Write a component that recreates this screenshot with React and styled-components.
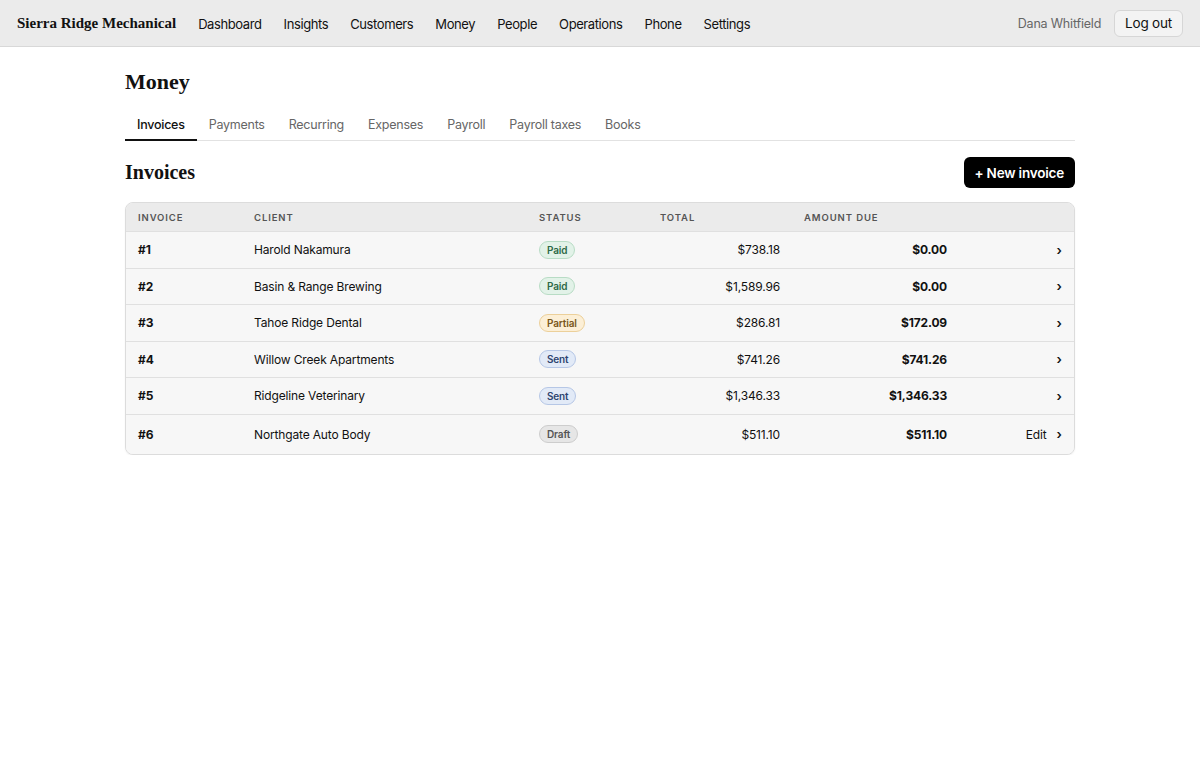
import React from 'react';
import styled, { createGlobalStyle } from 'styled-components';

const Global = createGlobalStyle`
  html, body { margin: 0; padding: 0; background: #fff; }
  body {
    font-family: Inter, "Helvetica Neue", Arial, sans-serif;
    color: #111;
    -webkit-font-smoothing: antialiased;
  }
  * { box-sizing: border-box; }
`;

const TopBar = styled.header`
  height: 47px;
  background: #ebebeb;
  border-bottom: 1px solid #d8d8d8;
  display: flex;
  align-items: center;
  padding: 0 17px;
`;

const Brand = styled.div`
  font-family: "Liberation Serif", Georgia, serif;
  font-weight: 700;
  font-size: 15px;
  margin: 1px 22px 0 0;
`;

const MainNav = styled.nav`
  display: flex;
  gap: 22px;
  flex: 1;
`;

const NavItem = styled.a`
  font-size: 13px;
  letter-spacing: -0.4px;
  color: #111;
  text-decoration: none;
  padding-top: 1px;
`;

const UserBox = styled.div`
  display: flex;
  align-items: center;
  gap: 13px;
`;

const UserName = styled.span`
  font-size: 12.5px;
  letter-spacing: -0.2px;
  color: #666;
`;

const GhostButton = styled.button`
  font-family: inherit;
  font-size: 13.5px;
  letter-spacing: -0.2px;
  color: #111;
  background: #f3f3f3;
  border: 1px solid #d6d6d6;
  border-radius: 6px;
  height: 27px;
  padding: 0 10px;
`;

const Page = styled.main`
  width: 950px;
  margin: 0 auto;
  padding-top: 22px;
`;

const PageTitle = styled.h1`
  font-family: "Liberation Serif", Georgia, serif;
  font-size: 22px;
  font-weight: 700;
  margin: 0 0 22px;
  line-height: 26px;
`;

const Tabs = styled.div`
  display: flex;
  border-bottom: 1px solid #e2e2e2;
`;

const Tab = styled.a`
  font-size: 12.5px;
  letter-spacing: -0.25px;
  padding: 0 12px 7px;
  color: ${p => (p.$active ? '#111' : '#666')};
  font-weight: ${p => (p.$active ? 500 : 400)};
  border-bottom: 2px solid ${p => (p.$active ? '#111' : 'transparent')};
  margin-bottom: -1px;
  text-decoration: none;
`;

const SectionHead = styled.div`
  display: flex;
  align-items: center;
  justify-content: space-between;
  margin: 16px 0 14px;
`;

const SectionTitle = styled.h2`
  font-family: "Liberation Serif", Georgia, serif;
  font-size: 20px;
  font-weight: 700;
  margin: 0;
`;

const PrimaryButton = styled.button`
  font-family: inherit;
  font-size: 13.5px;
  font-weight: 600;
  letter-spacing: -0.2px;
  color: #fff;
  background: #000;
  border: none;
  border-radius: 6px;
  height: 31px;
  padding: 0 11px;
`;

const Table = styled.div`
  border: 1px solid #dcdcdc;
  border-radius: 8px;
  overflow: hidden;
  background: #f7f7f7;
  box-shadow: 0 1px 2px rgba(0, 0, 0, 0.05);
`;

const Row = styled.div`
  display: grid;
  grid-template-columns: 116px 285px 121px 144px 167px 1fr;
  align-items: center;
  min-height: ${p => (p.$head ? '28px' : '36.5px')};
  background: ${p => (p.$head ? '#ebebeb' : '#f7f7f7')};
  border-top: ${p => (p.$head ? 'none' : '1px solid #e0e0e0')};
`;

const HeadCell = styled.div`
  padding: 1px 12px 0;
  font-size: 9.5px;
  font-weight: 600;
  letter-spacing: 0.9px;
  text-transform: uppercase;
  color: #555;
`;

const Cell = styled.div`
  padding: 0 12px;
  font-size: 12px;
  letter-spacing: -0.15px;
  color: #111;
  text-align: ${p => p.$align || 'left'};
  font-weight: ${p => (p.$bold ? 700 : 400)};
`;

const ActionCell = styled.div`
  padding: 0 12px;
  display: flex;
  justify-content: flex-end;
  align-items: center;
  gap: 10px;
`;

const EditButton = styled.button`
  font-family: inherit;
  font-size: 12px;
  letter-spacing: -0.15px;
  color: #111;
  background: transparent;
  border: none;
  padding: 12px 0;
`;

const Chevron = styled.span`
  font-size: 13px;
  font-weight: 600;
`;

const badgeColors = {
  Paid: { bg: '#e2f2e8', bd: '#b8dcc5', fg: '#2e6a47' },
  Partial: { bg: '#fcefd6', bd: '#ecd09a', fg: '#7a5719' },
  Sent: { bg: '#e2eaf7', bd: '#b6c7e6', fg: '#2e4470' },
  Draft: { bg: '#e6e6e6', bd: '#cdcdcd', fg: '#555' },
};

const Badge = styled.span`
  display: inline-block;
  font-size: 10px;
  font-weight: 600;
  line-height: 16px;
  padding: 0 7px;
  border-radius: 9px;
  background: ${p => badgeColors[p.$status].bg};
  border: 1px solid ${p => badgeColors[p.$status].bd};
  color: ${p => badgeColors[p.$status].fg};
`;

const navLinks = ['Dashboard', 'Insights', 'Customers', 'Money', 'People', 'Operations', 'Phone', 'Settings'];
const tabs = ['Invoices', 'Payments', 'Recurring', 'Expenses', 'Payroll', 'Payroll taxes', 'Books'];

const invoices = [
  { id: '#1', client: 'Harold Nakamura', status: 'Paid', total: '$738.18', due: '$0.00' },
  { id: '#2', client: 'Basin & Range Brewing', status: 'Paid', total: '$1,589.96', due: '$0.00' },
  { id: '#3', client: 'Tahoe Ridge Dental', status: 'Partial', total: '$286.81', due: '$172.09' },
  { id: '#4', client: 'Willow Creek Apartments', status: 'Sent', total: '$741.26', due: '$741.26' },
  { id: '#5', client: 'Ridgeline Veterinary', status: 'Sent', total: '$1,346.33', due: '$1,346.33' },
  { id: '#6', client: 'Northgate Auto Body', status: 'Draft', total: '$511.10', due: '$511.10' },
];

export default function App() {
  return (
    <>
      <Global />
      <TopBar>
        <Brand>Sierra Ridge Mechanical</Brand>
        <MainNav>
          {navLinks.map(l => (
            <NavItem key={l}>{l}</NavItem>
          ))}
        </MainNav>
        <UserBox>
          <UserName>Dana Whitfield</UserName>
          <GhostButton>Log out</GhostButton>
        </UserBox>
      </TopBar>

      <Page>
        <PageTitle>Money</PageTitle>
        <Tabs>
          {tabs.map((t, i) => (
            <Tab key={t} $active={i === 0}>{t}</Tab>
          ))}
        </Tabs>

        <SectionHead>
          <SectionTitle>Invoices</SectionTitle>
          <PrimaryButton>+ New invoice</PrimaryButton>
        </SectionHead>

        <Table>
          <Row $head>
            <HeadCell>Invoice</HeadCell>
            <HeadCell>Client</HeadCell>
            <HeadCell>Status</HeadCell>
            <HeadCell>Total</HeadCell>
            <HeadCell>Amount due</HeadCell>
            <HeadCell />
          </Row>
          {invoices.map(inv => (
            <Row key={inv.id}>
              <Cell $bold>{inv.id}</Cell>
              <Cell>{inv.client}</Cell>
              <Cell>
                <Badge $status={inv.status}>{inv.status}</Badge>
              </Cell>
              <Cell $align="right">{inv.total}</Cell>
              <Cell $align="right" $bold>{inv.due}</Cell>
              <ActionCell>
                {inv.status === 'Draft' && <EditButton>Edit</EditButton>}
                <Chevron>›</Chevron>
              </ActionCell>
            </Row>
          ))}
        </Table>
      </Page>
    </>
  );
}
